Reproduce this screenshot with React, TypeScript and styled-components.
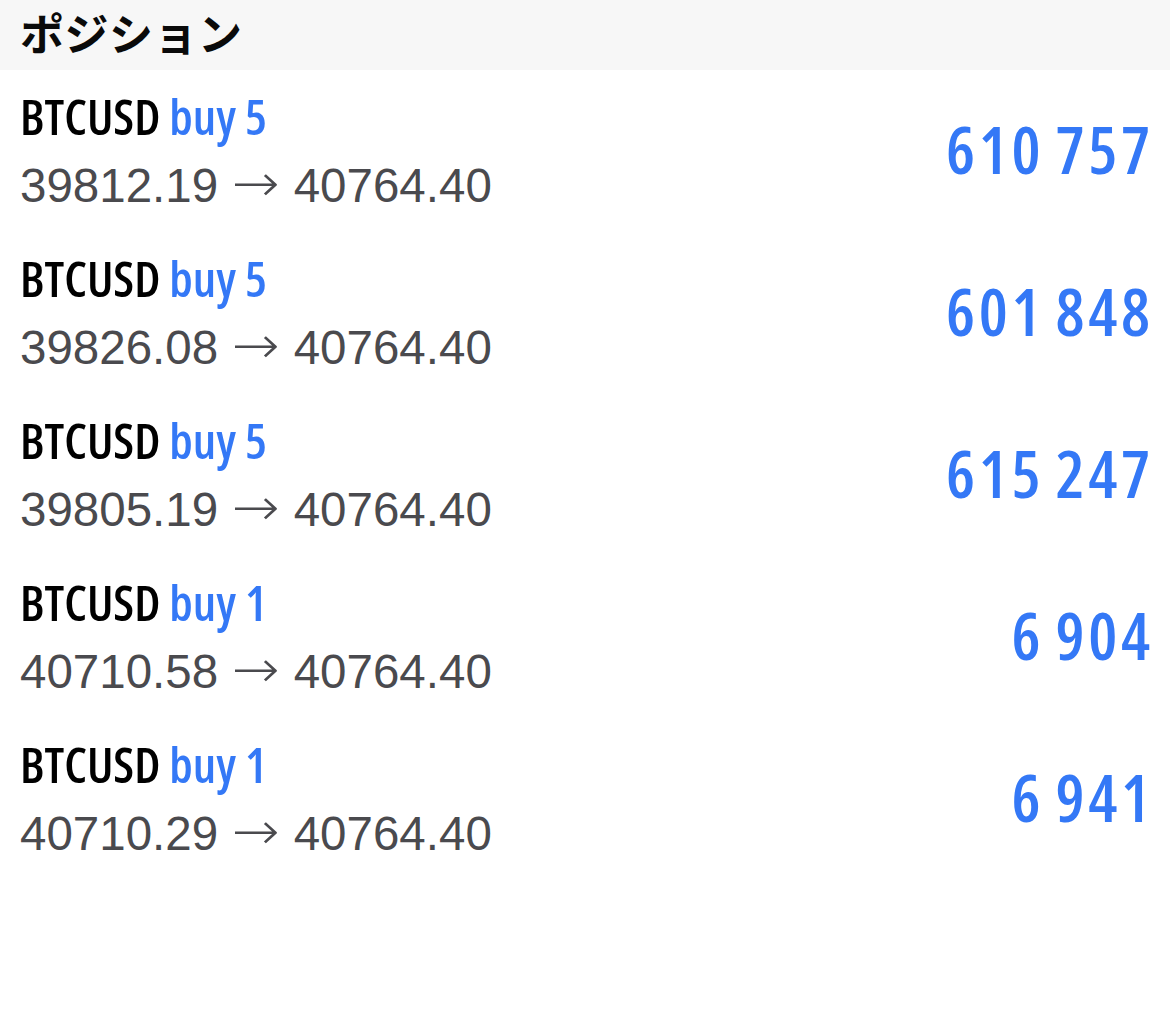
import React from "react";
import styled, { createGlobalStyle } from "styled-components";

const GlobalStyle = createGlobalStyle`
  html, body { margin: 0; padding: 0; background: #ffffff; }
  body { font-family: "Liberation Sans", Arial, sans-serif; }
`;

const Page = styled.div`
  width: 1170px;
  min-height: 1035px;
  background: #ffffff;
`;

const Header = styled.header`
  height: 70px;
  box-sizing: border-box;
  background: #f7f7f7;
  display: flex;
  align-items: center;
  padding: 0 0 6px 20px;
`;

const Title = styled.h1`
  margin: 0;
  font-family: "Noto Sans CJK JP", "Noto Sans", sans-serif;
  font-weight: 700;
  font-size: 44px;
  line-height: 50px;
  color: #0a0a0a;
  letter-spacing: 0.5px;
`;

const List = styled.ul`
  list-style: none;
  margin: 0;
  padding: 0;
`;

const Row = styled.li`
  height: 162px;
  box-sizing: border-box;
  display: flex;
  align-items: center;
  justify-content: space-between;
  padding: 0 20px 0 20px;
`;

const Info = styled.div`
  display: flex;
  flex-direction: column;
  gap: 14px;
`;

const Symbol = styled.div`
  font-family: "Open Sans", sans-serif;
  font-stretch: 75%;
  font-weight: 600;
  font-size: 49px;
  line-height: 56px;
  color: #000000;
  white-space: nowrap;
`;

const Side = styled.span`
  color: #3478f6;
`;

const Prices = styled.div`
  font-family: "Liberation Sans", Arial, sans-serif;
  font-size: 47.5px;
  line-height: 56px;
  color: #4a4a4e;
  white-space: nowrap;
  display: flex;
  align-items: center;
  gap: 16px;
`;

const Arrow = styled.span`
  font-family: "DejaVu Sans", sans-serif;
  font-weight: 300;
  font-size: 52px;
  line-height: 56px;
  color: #4a4a4e;
  display: inline-block;
  transform: translateY(-3px) scaleX(1.1);
`;

const Profit = styled.div`
  font-family: "Open Sans", sans-serif;
  font-stretch: 75%;
  font-weight: 650;
  font-size: 65px;
  line-height: 70px;
  letter-spacing: 3.6px;
  word-spacing: -4px;
  margin-right: -3.6px;
  color: #3478f6;
  white-space: nowrap;
  margin-top: -4px;
`;

type Position = {
  symbol: string;
  side: string;
  volume: number;
  open: string;
  current: string;
  profit: string;
};

const positions: Position[] = [
  { symbol: "BTCUSD", side: "buy", volume: 5, open: "39812.19", current: "40764.40", profit: "610 757" },
  { symbol: "BTCUSD", side: "buy", volume: 5, open: "39826.08", current: "40764.40", profit: "601 848" },
  { symbol: "BTCUSD", side: "buy", volume: 5, open: "39805.19", current: "40764.40", profit: "615 247" },
  { symbol: "BTCUSD", side: "buy", volume: 1, open: "40710.58", current: "40764.40", profit: "6 904" },
  { symbol: "BTCUSD", side: "buy", volume: 1, open: "40710.29", current: "40764.40", profit: "6 941" },
];

export default function App() {
  return (
    <Page>
      <GlobalStyle />
      <Header>
        <Title>ポジション</Title>
      </Header>
      <List>
        {positions.map((p, i) => (
          <Row key={i}>
            <Info>
              <Symbol>
                {p.symbol} <Side>{p.side} {p.volume}</Side>
              </Symbol>
              <Prices>
                <span>{p.open}</span>
                <Arrow>→</Arrow>
                <span>{p.current}</span>
              </Prices>
            </Info>
            <Profit>{p.profit}</Profit>
          </Row>
        ))}
      </List>
    </Page>
  );
}
